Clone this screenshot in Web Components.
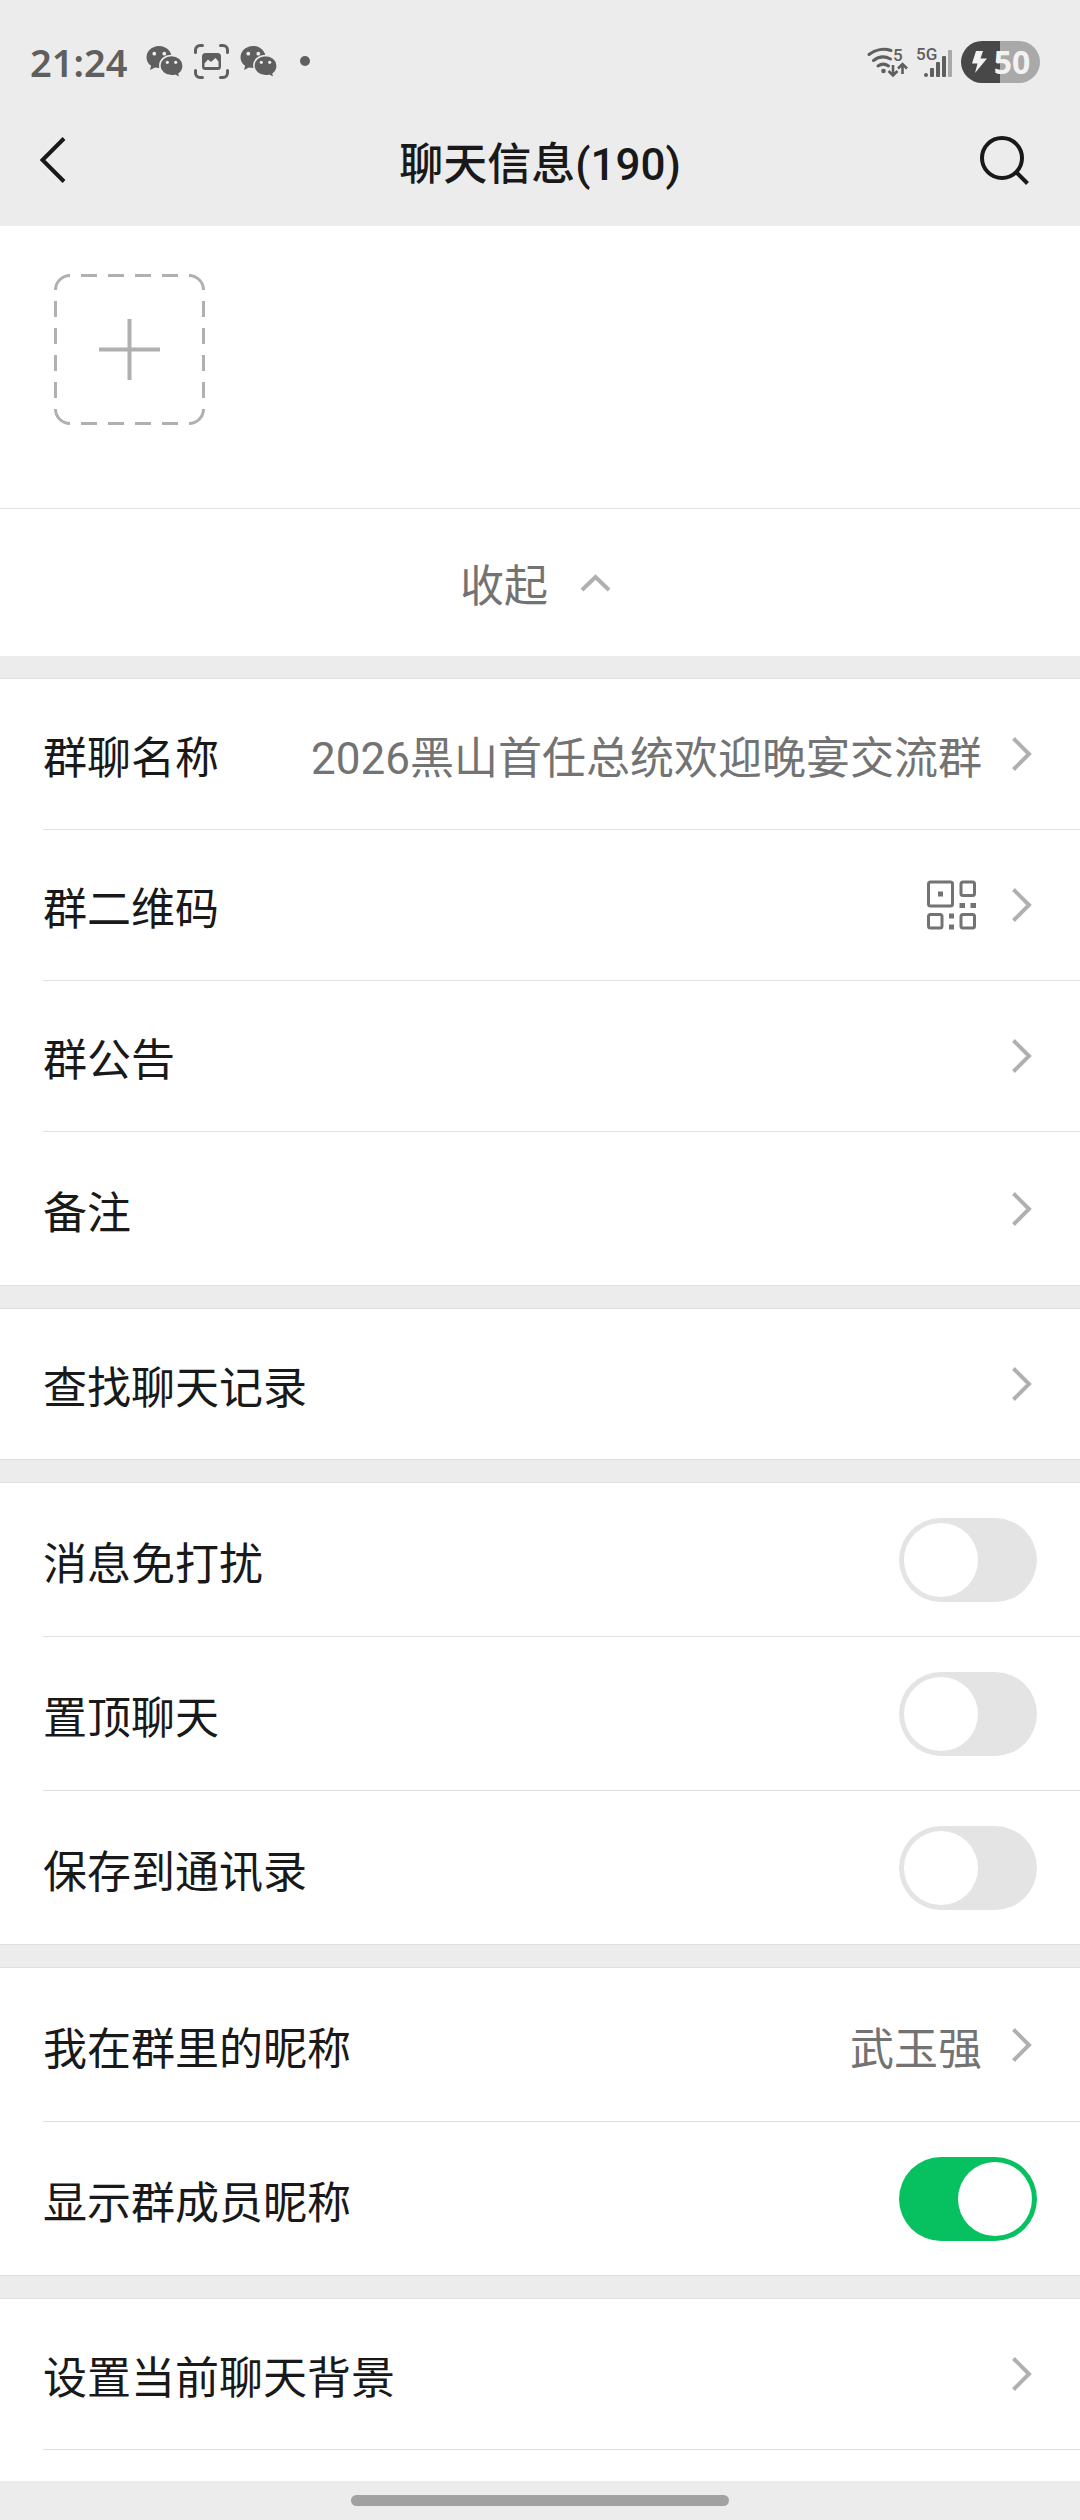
<!DOCTYPE html>
<html lang="zh-CN">
<head>
<meta charset="UTF-8">
<meta name="viewport" content="width=device-width, initial-scale=1.0">
<title>聊天信息</title>
<style>
  :root {
    --background: #ececec;
    --card: #ffffff;
    --foreground: #191919;
    --muted: #737373;
    --icon: #b0b0b0;
    --border: #e0e0e0;
    --status: #5f5f5f;
    --primary: #07c160;
    --gutter: 43px;
  }

  body {
    margin: 0;
    min-height: 100vh;
    display: flex;
    flex-direction: column;
    background-color: var(--background);
    color: var(--foreground);
    font-family: Roboto, "Noto Sans CJK SC", sans-serif;
    font-size: 44px;
    line-height: 60px;
  }

  main {
    flex: 1;
    display: flex;
    flex-direction: column;
  }
</style>
</head>
<body>
  <status-bar time="21:24" battery="50"></status-bar>
  <nav-header>聊天信息(190)</nav-header>
  <main>
    <member-panel></member-panel>
    <setting-group>
      <link-row label="群聊名称">2026黑山首任总统欢迎晚宴交流群</link-row>
      <link-row label="群二维码"><qr-icon></qr-icon></link-row>
      <link-row label="群公告"></link-row>
      <link-row label="备注" tall></link-row>
    </setting-group>
    <setting-group>
      <link-row label="查找聊天记录"></link-row>
    </setting-group>
    <setting-group>
      <switch-row label="消息免打扰"></switch-row>
      <switch-row label="置顶聊天"></switch-row>
      <switch-row label="保存到通讯录"></switch-row>
    </setting-group>
    <setting-group>
      <link-row label="我在群里的昵称" tall>武玉强</link-row>
      <switch-row label="显示群成员昵称" checked></switch-row>
    </setting-group>
    <setting-group open>
      <link-row label="设置当前聊天背景"></link-row>
    </setting-group>
  </main>
  <home-indicator></home-indicator>

<script>
const chatBubbles = `
  <svg width="38" height="36" viewBox="0 0 38 36" aria-hidden="true">
    <path fill="#5f5f5f" d="M13 2C6 2 .5 7 .5 13.2c0 3.6 1.8 6.6 4.6 8.6L4 26l5-2.6c1.3.3 2.6.5 4 .5 7 0 12.5-4.8 12.5-10.8S20 2 13 2z"/>
    <path fill="#5f5f5f" stroke="#ececec" stroke-width="1.6" d="M25.5 11.5c-6.500 0-11.700 4.500-11.700 10.200s5.200 10.200 11.700 10.200c1.300 0 2.500-.2 3.600-.5l5 2.500-1-4c2.500-1.900 4.100-4.900 4.100-8.200 0-5.700-5.200-10.200-11.700-10.200z"/>
    <g fill="#ececec">
      <circle cx="8.3" cy="9.7" r="1.9"/>
      <circle cx="18.3" cy="9.7" r="1.9"/>
      <circle cx="21.3" cy="18.3" r="1.6"/>
      <circle cx="29.7" cy="18.3" r="1.6"/>
    </g>
  </svg>`;

class StatusBar extends HTMLElement {
  constructor() {
    super();
    this.attachShadow({ mode: 'open' });
    const time = this.getAttribute('time');
    const battery = this.getAttribute('battery');
    this.shadowRoot.innerHTML = `
      <style>
        :host {
          display: flex;
          align-items: center;
          justify-content: space-between;
          height: 64px;
          padding: 30px 40px 0 30px;
          color: var(--status);
          font-family: "Noto Sans", sans-serif;
          font-weight: 600;
        }

        .side {
          display: flex;
          align-items: center;
        }

        .left {
          gap: 10px;
        }

        .right {
          gap: 9px;
        }

        svg {
          display: block;
          overflow: visible;
        }

        text {
          font: 500 17px Roboto, sans-serif;
          fill: #5f5f5f;
        }

        .time {
          min-width: 106px;
          font-size: 38px;
          line-height: 64px;
        }

        .battery {
          display: flex;
          align-items: center;
          justify-content: center;
          gap: 7px;
          width: 79px;
          height: 42px;
          border-radius: 21px;
          background: linear-gradient(to right, #484848 50%, #a9a9a9 50%);
          color: #f2f2f2;
          font-size: 32px;
          font-weight: 700;
          line-height: 42px;
        }
      </style>
      <div class="side left">
        <span class="time">${time}</span>
        ${chatBubbles}
        <svg width="36" height="36" viewBox="0 0 36 36" aria-hidden="true">
          <path fill="none" stroke="#5f5f5f" stroke-width="3" stroke-linecap="round" d="M1.5 8.5V6A4.5 4.5 0 0 1 6 1.5h2.5M26.5 1.5H29A4.5 4.5 0 0 1 33.5 6v2.5M33.5 26.5V29a4.5 4.5 0 0 1-4.5 4.5h-2.5M8.5 33.5H6A4.5 4.5 0 0 1 1.5 29v-2.5"/>
          <rect x="8" y="9" width="19" height="17" rx="3.5" fill="#5f5f5f"/>
          <path fill="#ececec" d="M10.5 23v-3.5l3.5-4 3 2.5 4.5-4 3 3.5V23z"/>
        </svg>
        ${chatBubbles}
        <svg width="32" height="36" viewBox="0 0 32 36" aria-hidden="true">
          <circle cx="17" cy="17" r="5" fill="#5f5f5f"/>
        </svg>
      </div>
      <div class="side right">
        <svg width="40" height="36" viewBox="0 0 40 36" aria-hidden="true">
          <g fill="none" stroke="#5f5f5f" stroke-width="3" stroke-linecap="round">
            <path d="M2 10.5C8.5 5.5 17 4 24 6.5"/>
            <path d="M6.5 16.5c5-4 11.500-4.500 17-1.500"/>
            <path d="M11 22c3.5-2.5 7-2.5 10.5 0"/>
          </g>
          <circle cx="16.5" cy="27" r="2.3" fill="#5f5f5f"/>
          <text x="26" y="17">5</text>
          <path fill="none" stroke="#5f5f5f" stroke-width="2.6" d="M26 21v10M21.5 27l4.5 4.5 4.5-4.5M35.500 30V20M31 24.5l4.5-4.5 4.5 4.5"/>
        </svg>
        <svg width="36" height="36" viewBox="0 0 36 36" aria-hidden="true">
          <text x="0" y="16">5G</text>
          <g fill="#5f5f5f">
            <circle cx="10" cy="31" r="2"/>
            <rect x="14" y="24" width="4" height="9" rx="1"/>
            <rect x="20" y="18" width="4" height="15" rx="1"/>
            <rect x="26" y="12" width="4" height="21" rx="1"/>
          </g>
          <rect x="32" y="6" width="4" height="27" rx="1" fill="#a9a9a9"/>
        </svg>
        <div class="battery">
          <svg width="16" height="22" viewBox="0 0 16 22" aria-hidden="true">
            <path fill="#f2f2f2" d="M5 0h7L9.5 7.5H16L4 22l2.5-9.5H1z"/>
          </svg>
          <span>${battery}</span>
        </div>
      </div>
    `;
  }
}

class NavHeader extends HTMLElement {
  constructor() {
    super();
    this.attachShadow({ mode: 'open' });
    this.shadowRoot.innerHTML = `
      <style>
        :host {
          display: grid;
          grid-template-columns: 80px 1fr 80px;
          align-items: center;
          height: 132px;
          padding: 0 24px;
        }

        button {
          display: flex;
          align-items: center;
          height: 80px;
          padding: 0;
          border: 0;
          background: none;
          color: inherit;
          cursor: pointer;
        }

        .search {
          justify-content: flex-end;
        }

        h1 {
          margin: 0;
          padding-top: 10px;
          font-size: 44px;
          font-weight: 500;
          text-align: center;
        }
      </style>
      <button type="button" aria-label="返回">
        <svg width="56" height="56" viewBox="0 0 56 56">
          <path fill="none" stroke="currentColor" stroke-width="4" d="M40 6.5 18.5 28 40 49.5"/>
        </svg>
      </button>
      <h1><slot></slot></h1>
      <button type="button" class="search" aria-label="搜索">
        <svg width="80" height="56" viewBox="0 0 80 56">
          <g fill="none" stroke="currentColor" stroke-width="4">
            <circle cx="26" cy="26" r="20"/>
            <path d="M40.5 40.5 51.5 51.5"/>
          </g>
        </svg>
      </button>
    `;
  }
}

class MemberPanel extends HTMLElement {
  constructor() {
    super();
    this.attachShadow({ mode: 'open' });
    this.shadowRoot.innerHTML = `
      <style>
        :host {
          display: block;
          background-color: var(--card);
        }

        button {
          padding: 0;
          border: 0;
          background: none;
          font: inherit;
          cursor: pointer;
        }

        svg {
          display: block;
          fill: none;
          stroke: var(--icon);
        }

        .members {
          display: flex;
          flex-wrap: wrap;
          padding: 48px 54px 83px;
          border-bottom: 1px solid var(--border);
        }

        .collapse {
          display: flex;
          align-items: center;
          justify-content: center;
          gap: 32px;
          width: 100%;
          height: 147px;
          color: var(--muted);
        }

        .collapse span {
          padding-top: 8px;
        }
      </style>
      <div class="members">
        <button type="button" aria-label="添加成员">
          <svg width="151" height="151" viewBox="0 0 151 151" stroke-width="3">
            <path d="M1.5 16A14.5 14.5 0 0 1 16 1.5M135 1.5A14.5 14.5 0 0 1 149.5 16M149.5 135A14.5 14.5 0 0 1 135 149.5M16 149.5A14.5 14.5 0 0 1 1.5 135"/>
            <path stroke-dasharray="16 11" stroke-dashoffset="16" d="M16 1.5H135M16 149.5H135M1.5 16V135M149.5 16V135"/>
            <path stroke-width="4" d="M75.5 45v61M45 75.5h61"/>
          </svg>
        </button>
      </div>
      <button type="button" class="collapse">
        <span>收起</span>
        <svg width="40" height="20" viewBox="0 0 40 20" stroke-width="4" aria-hidden="true">
          <path d="M2 17 15.5 4 29 17"/>
        </svg>
      </button>
    `;
  }
}

class SettingGroup extends HTMLElement {
  constructor() {
    super();
    this.attachShadow({ mode: 'open' });
    this.shadowRoot.innerHTML = `
      <style>
        :host {
          display: block;
          margin-top: 22px;
          border-top: 1px solid var(--border);
          background-color: var(--card);
        }

        :host([open]) {
          flex: 1;
          padding-bottom: 31px;
        }

        /* the last line of a closed group runs edge to edge */
        :host(:not([open])) ::slotted(:last-child) {
          --line-inset: 0px;
        }
      </style>
      <slot></slot>
    `;
  }
}

const rowStyles = `
  :host {
    display: block;
  }

  .row {
    display: flex;
    align-items: center;
    justify-content: space-between;
    gap: 27px;
    height: 150px;
    padding: 0 var(--gutter);
    color: inherit;
    text-decoration: none;
  }

  .label,
  .value {
    padding-top: 10px;
    white-space: nowrap;
  }

  .line {
    height: 1px;
    margin-left: var(--line-inset, var(--gutter));
    background-color: var(--border);
  }
`;

class LinkRow extends HTMLElement {
  constructor() {
    super();
    this.attachShadow({ mode: 'open' });
    this.shadowRoot.innerHTML = `
      <style>
        ${rowStyles}

        :host([tall]) .row {
          height: 153px;
        }

        .value {
          flex: 1;
          overflow: hidden;
          color: var(--muted);
          text-align: right;
          text-overflow: ellipsis;
        }

        ::slotted(qr-icon) {
          margin-top: -10px;
        }

        .chevron {
          flex: none;
          fill: none;
          stroke: var(--icon);
          stroke-width: 4;
        }
      </style>
      <a class="row" href="#">
        <span class="label">${this.getAttribute('label')}</span>
        <span class="value"><slot></slot></span>
        <svg class="chevron" width="28" height="40" viewBox="0 0 28 40" aria-hidden="true">
          <path d="M4.5 4.5 20 20 4.5 35.5"/>
        </svg>
      </a>
      <div class="line"></div>
    `;
  }
}

class SwitchRow extends HTMLElement {
  constructor() {
    super();
    this.attachShadow({ mode: 'open' });
    this.shadowRoot.innerHTML = `
      <style>
        ${rowStyles}

        .row {
          height: 153px;
        }

        input {
          appearance: none;
          flex: none;
          box-sizing: border-box;
          display: flex;
          width: 138px;
          height: 84px;
          margin: 0;
          padding: 5px;
          border-radius: 42px;
          background-color: #e4e4e4;
          cursor: pointer;
        }

        input::before {
          content: "";
          width: 74px;
          height: 74px;
          border-radius: 50%;
          background-color: #fff;
        }

        input:checked {
          justify-content: flex-end;
          background-color: var(--primary);
        }
      </style>
      <div class="row">
        <label class="label" for="toggle">${this.getAttribute('label')}</label>
        <input type="checkbox" role="switch" id="toggle" ${this.hasAttribute('checked') ? 'checked' : ''}>
      </div>
      <div class="line"></div>
    `;
  }
}

class QrIcon extends HTMLElement {
  constructor() {
    super();
    this.attachShadow({ mode: 'open' });
    this.shadowRoot.innerHTML = `
      <style>
        :host {
          display: flex;
          justify-content: flex-end;
        }
      </style>
      <svg width="60" height="60" viewBox="0 0 60 60" aria-hidden="true">
        <g fill="none" stroke="#737373" stroke-width="3">
          <rect x="6.5" y="7" width="24" height="24" rx="2"/>
          <rect x="39" y="7" width="13.5" height="13.5" rx="2"/>
          <rect x="6.5" y="39.5" width="13.5" height="13.5" rx="2"/>
          <rect x="39" y="39.5" width="13.5" height="13.5" rx="2"/>
        </g>
        <path fill="#737373" d="M16 16.5h5v5h-5zM37.5 28h5.5v5h-5.5zM48.5 28h5.5v5h-5.5zM27 38.5h5v5h-5zM27 49.5h5v5h-5z"/>
      </svg>
    `;
  }
}

class HomeIndicator extends HTMLElement {
  constructor() {
    super();
    this.attachShadow({ mode: 'open' });
    this.shadowRoot.innerHTML = `
      <style>
        :host {
          display: flex;
          align-items: center;
          justify-content: center;
          height: 39px;
        }

        .pill {
          width: 35%;
          height: 11px;
          border-radius: 6px;
          background-color: #a1a1a1;
        }
      </style>
      <div class="pill"></div>
    `;
  }
}

customElements.define('status-bar', StatusBar);
customElements.define('nav-header', NavHeader);
customElements.define('member-panel', MemberPanel);
customElements.define('setting-group', SettingGroup);
customElements.define('link-row', LinkRow);
customElements.define('switch-row', SwitchRow);
customElements.define('qr-icon', QrIcon);
customElements.define('home-indicator', HomeIndicator);
</script>
</body>
</html>
